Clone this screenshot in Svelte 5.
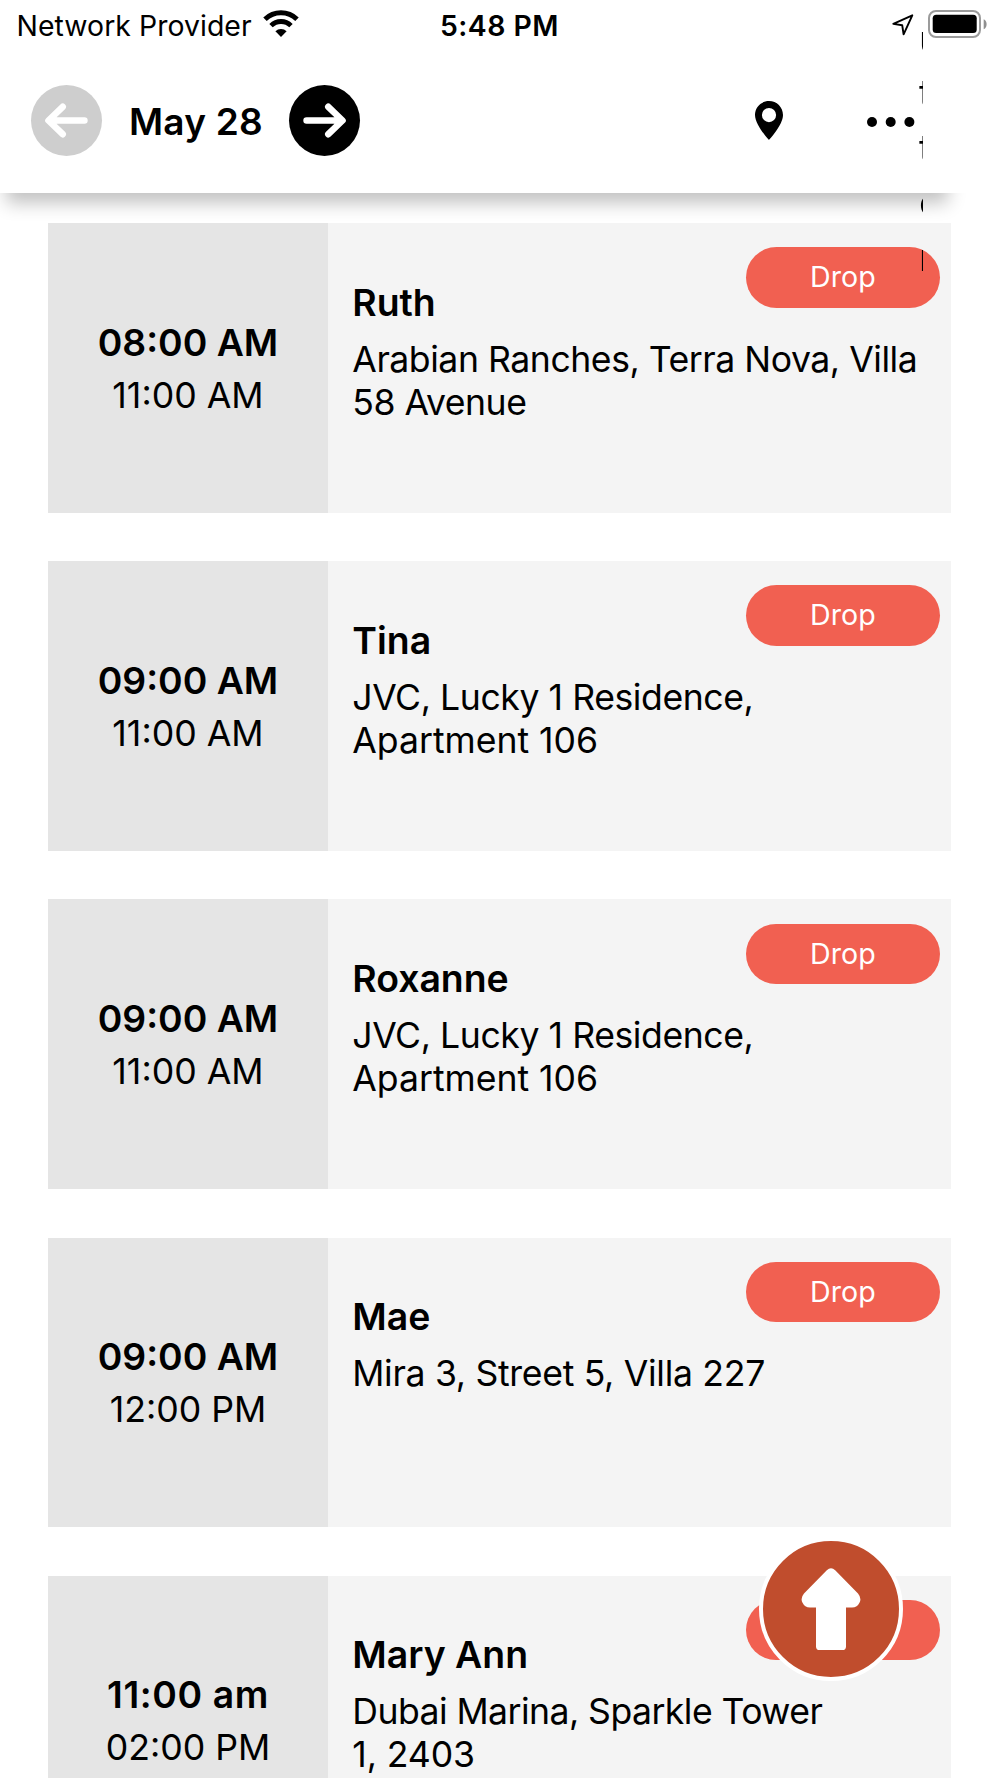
<script>
	// tracking: letter spacing of each address line, in px
	const stops = [
		{
			start: '08:00 AM',
			end: '11:00 AM',
			name: 'Ruth',
			address: [
				{ text: 'Arabian Ranches, Terra Nova, Villa', tracking: -0.45 },
				{ text: '58 Avenue', tracking: -0.5 }
			]
		},
		{
			start: '09:00 AM',
			end: '11:00 AM',
			name: 'Tina',
			address: [
				{ text: 'JVC, Lucky 1 Residence,', tracking: -0.42 },
				{ text: 'Apartment 106', tracking: 0 }
			]
		},
		{
			start: '09:00 AM',
			end: '11:00 AM',
			name: 'Roxanne',
			address: [
				{ text: 'JVC, Lucky 1 Residence,', tracking: -0.42 },
				{ text: 'Apartment 106', tracking: 0 }
			]
		},
		{
			start: '09:00 AM',
			end: '12:00 PM',
			name: 'Mae',
			address: [{ text: 'Mira 3, Street 5, Villa 227', tracking: -0.3 }]
		},
		{
			start: '11:00 am',
			end: '02:00 PM',
			name: 'Mary Ann',
			address: [
				{ text: 'Dubai Marina, Sparkle Tower', tracking: -0.54 },
				{ text: '1, 2403', tracking: -0.1 }
			]
		}
	]
</script>

<div class="screen">
	<header>
		<div class="status">
			<div class="carrier">
				<span>Network Provider</span>
				<svg width="36" height="27" viewBox="0 0 36 27">
					<path d="M2 9.2A23 23 0 0 1 34 9.2" fill="none" stroke="#000" stroke-width="5" />
					<path d="M8 15.6A14.2 14.2 0 0 1 28 15.6" fill="none" stroke="#000" stroke-width="4.8" />
					<path d="M12.4 21.2A8 8 0 0 1 23.6 21.2L18 27Z" />
				</svg>
			</div>
			<strong>5:48 PM</strong>
			<div class="power">
				<svg width="22" height="22" viewBox="0 0 22 22">
					<path d="M20.3 1.3L1.3 9.9L10.2 11.2L11.6 20.3Z" fill="none" stroke="#000" stroke-width="1.9" stroke-linejoin="round" />
				</svg>
				<svg width="60" height="28" viewBox="0 0 60 28">
					<rect x="1" y="1" width="51" height="26" rx="7" fill="none" stroke="#9b9b9b" stroke-width="2" />
					<rect x="4.7" y="4.7" width="44" height="18.4" rx="3.5" />
					<path d="M55.7 9.2C59.6 11 59.6 17.4 55.7 19.2Z" fill="#8f8f8f" />
				</svg>
			</div>
		</div>
		<nav>
			<button class="prev" aria-label="Previous day">
				<svg width="71" height="71" viewBox="0 0 71 71">
					<path d="M53.4 35.5H18M31.7 21.8L17.5 35.5L31.7 49.2" />
				</svg>
			</button>
			<h1>May 28</h1>
			<button class="next" aria-label="Next day">
				<svg width="71" height="71" viewBox="0 0 71 71">
					<path d="M17.6 35.5H53M39.3 21.8L53.5 35.5L39.3 49.2" />
				</svg>
			</button>
			<svg class="pin" width="28" height="39" viewBox="0 0 28 39">
				<path fill-rule="evenodd" d="M14 0C6.2 0 0 6.2 0 14C0 24 14 39 14 39S28 24 28 14C28 6.2 21.8 0 14 0ZM14 7A7.1 7.1 0 1 1 14 21.2A7.1 7.1 0 0 1 14 7Z" />
			</svg>
			<svg class="dots" width="48" height="10" viewBox="0 0 48 10">
				<circle cx="5" cy="5" r="5" />
				<circle cx="23.7" cy="5" r="5" />
				<circle cx="42.4" cy="5" r="5" />
			</svg>
		</nav>
	</header>

	<main>
		{#each stops as stop}
			<article>
				<div class="time">
					<strong>{stop.start}</strong>
					<span>{stop.end}</span>
				</div>
				<div class="info">
					<h2>{stop.name}</h2>
					<p>
						{#each stop.address as line}
							<span style="letter-spacing: {line.tracking}px">{line.text}</span>
						{/each}
					</p>
				</div>
				<span class="drop">Drop</span>
			</article>
		{/each}
	</main>

	<!-- squeezed to a few pixels, so only the edge of each letter shows -->
	<div class="squeezed">Button</div>

	<button class="top" aria-label="Back to top">
		<svg width="60" height="84" viewBox="0 0 60 84">
			<path d="M25.8 2.2Q30 -1.6 34.2 2.2L57 25.5Q60.8 30 58.6 34.5Q56.4 39.3 51 39.6H45V78.4Q45 82 41.4 82H18.6Q15 82 15 78.4V39.6H9Q3.6 39.3 1.4 34.5Q-.8 30 3 25.5Z" fill="#fff" />
		</svg>
	</button>
</div>

<style>
	:global(body) {
		overflow: hidden;
		background: #fff;
	}
	.screen {
		position: relative;
		width: 1000px;
		height: 1778px;
		overflow: hidden;
		font-family: Inter, sans-serif;
		color: #000;
	}
	header {
		position: relative;
		z-index: 0;
		height: 193px;
	}
	/* shadow is narrower than the bar */
	header::before {
		content: '';
		position: absolute;
		z-index: -1;
		top: 60px;
		bottom: 0;
		left: 6px;
		width: 942px;
		box-shadow: 0 10px 17px rgba(0, 0, 0, 0.245);
	}
	.status {
		display: grid;
		grid-template-columns: 440px 452.4px auto;
		align-items: start;
		height: 85px;
		padding-top: 10px;
		box-sizing: border-box;
		background: #fff;
		font-size: 28.4px;
		line-height: 31px;
	}
	.status strong {
		font-weight: 600;
		letter-spacing: 0.45px;
	}
	.carrier {
		display: flex;
		padding-left: 16.5px;
		letter-spacing: 0.05px;
	}
	.carrier span {
		width: 246.5px;
		white-space: nowrap;
	}
	.power {
		display: flex;
		gap: 14px;
	}
	.power svg:first-child {
		margin-top: 4px;
	}
	nav {
		display: flex;
		align-items: center;
		height: 71px;
		padding: 0 0 37px 31px;
		background: #fff;
	}
	button {
		flex: none;
		padding: 0;
		border: 0;
		border-radius: 50%;
	}
	nav button {
		width: 71px;
		height: 71px;
	}
	nav button svg {
		display: block;
		fill: none;
		stroke: #fff;
		stroke-width: 6.6;
		stroke-linecap: round;
		stroke-linejoin: round;
	}
	.prev {
		background: #cecece;
	}
	.next {
		background: #000;
	}
	h1 {
		flex: none;
		width: 160px;
		margin: 2px 0 0 27px;
		font-size: 37px;
		font-weight: 600;
		line-height: 44px;
		letter-spacing: 0.2px;
		white-space: nowrap;
	}
	.pin {
		margin-left: 395px;
	}
	.dots {
		margin: 2px 0 0 84px;
	}
	main {
		display: flex;
		flex-direction: column;
		gap: 48.4px;
		padding: 30px 48.7px 0 48.3px;
	}
	article {
		position: relative;
		display: flex;
		flex: none;
		height: 289.8px;
		background: #f4f4f4;
	}
	.time {
		display: flex;
		flex: none;
		flex-direction: column;
		align-items: center;
		box-sizing: border-box;
		width: 279.4px;
		padding-top: 93.6px;
		background: #e5e5e5;
		font-size: 35.7px;
		line-height: 52px;
	}
	.time strong {
		font-size: 37.3px;
		font-weight: 600;
	}
	article:last-child strong {
		letter-spacing: 0.6px;
	}
	.info {
		padding: 57.6px 0 0 24.6px;
	}
	h2 {
		margin: 0;
		font-size: 37.4px;
		font-weight: 600;
		line-height: 44px;
	}
	p {
		margin: 13px 0 0;
		font-size: 35.6px;
		line-height: 43px;
		white-space: nowrap;
	}
	p span {
		display: block;
	}
	/* status pill overlaps the name row */
	.drop {
		position: absolute;
		top: 24.2px;
		right: 11.6px;
		width: 193.6px;
		height: 60.4px;
		border-radius: 31px;
		background: #f16051;
		color: #fff;
		font-size: 28.6px;
		line-height: 60.6px;
		letter-spacing: 0.1px;
		text-align: center;
	}
	.squeezed {
		position: absolute;
		top: -43px;
		left: 918.6px;
		width: 3.9px;
		overflow: hidden;
		font-size: 38px;
		line-height: 54.6px;
		word-break: break-all;
		will-change: transform;
	}
	.top {
		position: absolute;
		top: 1536.5px;
		left: 759px;
		display: flex;
		justify-content: center;
		box-sizing: border-box;
		width: 144px;
		height: 144px;
		padding-top: 27px;
		border: 4px solid #fff;
		background: #c04d2d;
	}
</style>
